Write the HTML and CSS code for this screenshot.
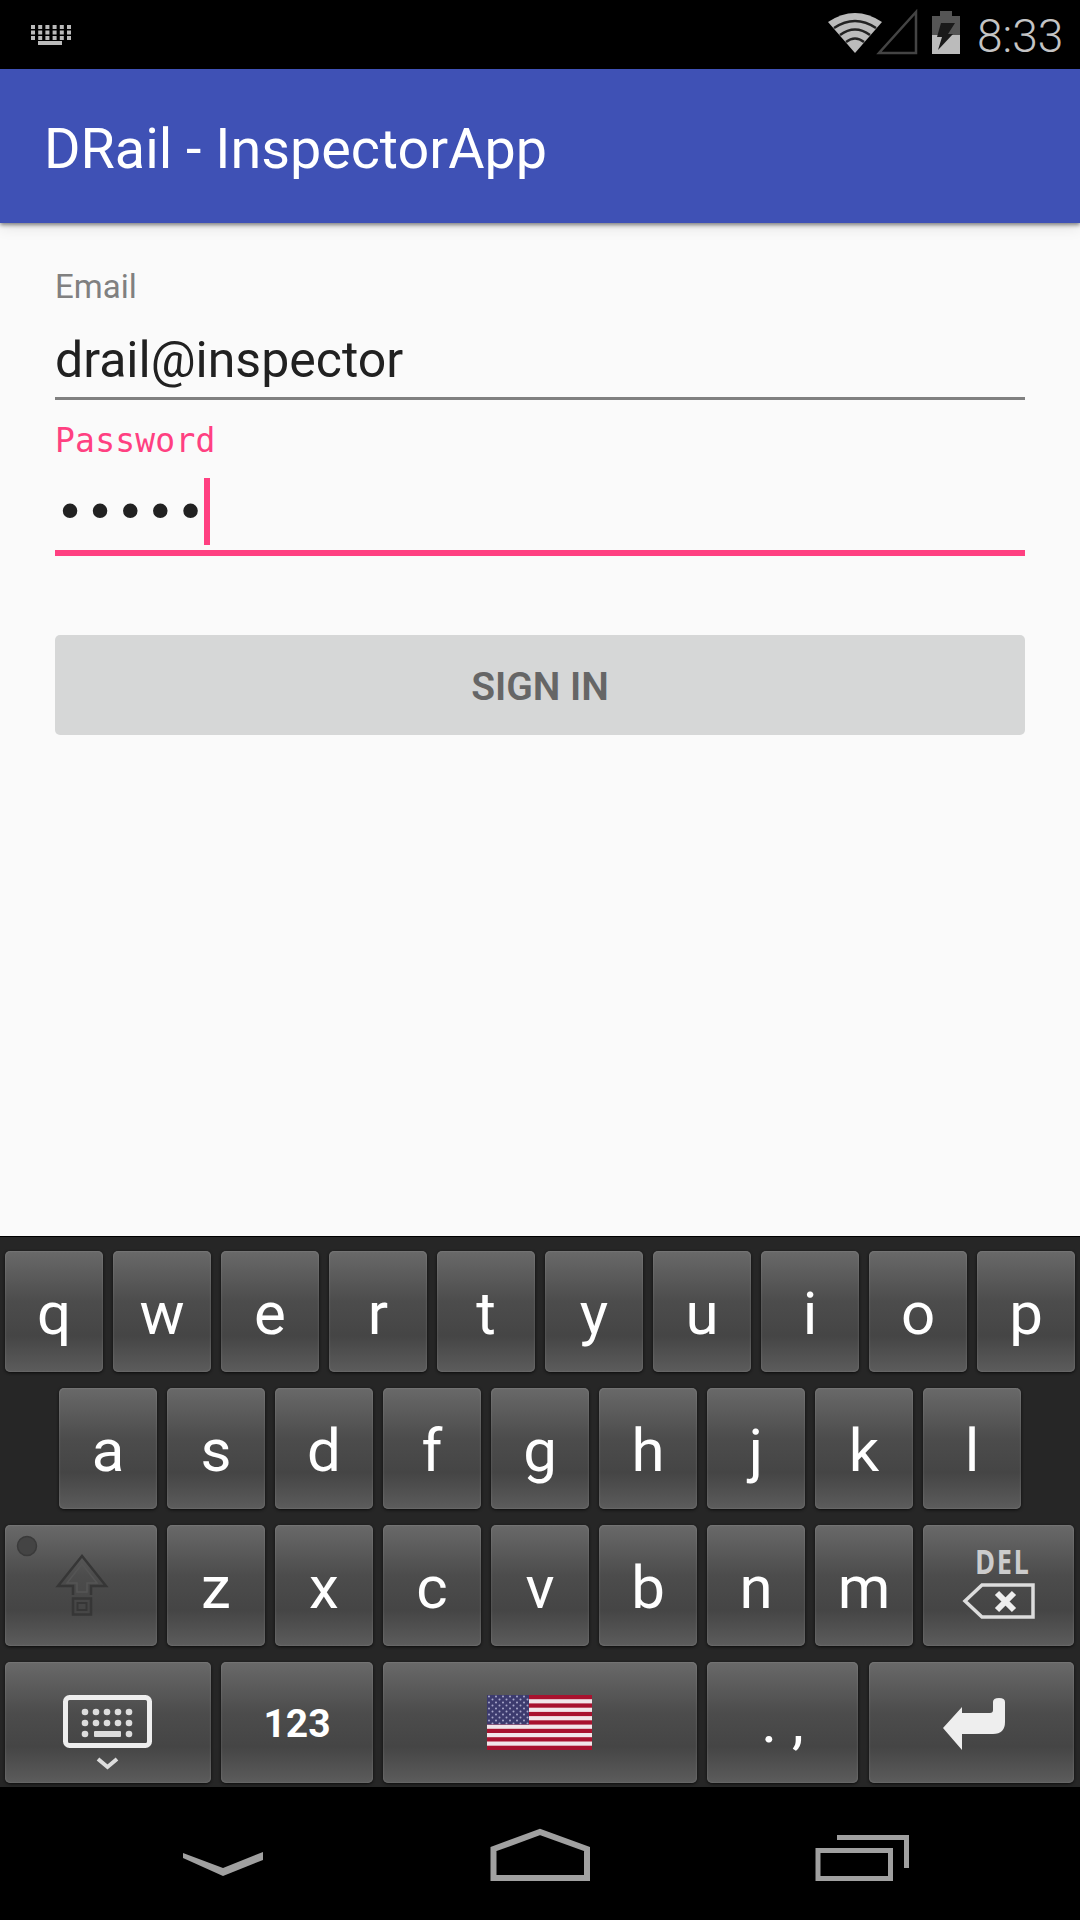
FILE: index.html
```html
<!DOCTYPE html>
<html lang="en">
<head>
<meta charset="UTF-8">
<meta name="viewport" content="width=device-width, initial-scale=1.0">
<title>DRail - InspectorApp</title>
<link rel="stylesheet" href="styles.css">
</head>
<body>

<div class="status-bar">
    <svg class="status-kbd" width="40" height="20" viewBox="0 0 40 20">
        <g stroke="#bbb" stroke-width="4" stroke-dasharray="4 3.2">
            <line x1="0" y1="2" x2="40" y2="2"/>
            <line x1="0" y1="7.5" x2="40" y2="7.5"/>
            <line x1="0" y1="13" x2="40" y2="13"/>
        </g>
        <rect x="7" y="16" width="24" height="4" fill="#bbb"/>
    </svg>
    <svg class="status-icons" width="140" height="69" viewBox="828 0 140 69">
        <!-- wifi -->
        <path d="M828 22 Q855 4 882 22 L855 53 Z" fill="#bbb"/>
        <g fill="none" stroke="#222" stroke-width="2.5">
            <path d="M834 28 Q855 14 876 28"/>
            <path d="M840 35 Q855 24 870 35"/>
            <path d="M846 42 Q855 35 864 42"/>
        </g>
        <!-- signal -->
        <path d="M916 12 V53 H879 Z" fill="none" stroke="#444" stroke-width="2.5"/>
        <!-- battery -->
        <rect x="940" y="11" width="12" height="6" fill="#555"/>
        <rect x="932" y="16" width="28" height="19" fill="#555"/>
        <rect x="932" y="35" width="28" height="19" fill="#bbb"/>
        <path d="M941 23 H955 L948 34 H953 L938 50 L942 37 H937 Z" fill="#1a1a1a"/>
    </svg>
    <span class="status-time">8:33</span>
</div>

<div class="app-bar">DRail - InspectorApp</div>

<div class="form">
    <div class="label">Email</div>
    <div class="field">drail@inspector</div>
    <div class="label label-focus">Password</div>
    <div class="field-focus">
        <span class="dots">•••••</span>
        <span class="cursor"></span>
    </div>
    <div class="sign-in">SIGN IN</div>
</div>

<div class="keyboard">
    <div class="row">
        <div class="key">q</div>
        <div class="key">w</div>
        <div class="key">e</div>
        <div class="key">r</div>
        <div class="key">t</div>
        <div class="key">y</div>
        <div class="key">u</div>
        <div class="key">i</div>
        <div class="key">o</div>
        <div class="key">p</div>
    </div>
    <div class="row row-home">
        <div class="key">a</div>
        <div class="key">s</div>
        <div class="key">d</div>
        <div class="key">f</div>
        <div class="key">g</div>
        <div class="key">h</div>
        <div class="key">j</div>
        <div class="key">k</div>
        <div class="key">l</div>
    </div>
    <div class="row">
        <div class="key key-icon key-152">
            <svg width="152" height="121" viewBox="5 1525 152 121">
                <circle cx="27" cy="1546" r="9.5" fill="#444" stroke="#3a3a3a" stroke-width="1.5"/>
                <path d="M73 1595 V1586 H58 L82 1556 L106 1586 H91 V1595" fill="none" stroke="#363636" stroke-width="2.5"/>
                <path d="M82 1564 L97 1583 H87 V1592 H77 V1583 H67 Z" fill="none" stroke="#555" stroke-width="1.5"/>
                <rect x="73" y="1598.500" width="18" height="16" fill="none" stroke="#363636" stroke-width="2.5"/>
                <rect x="77.500" y="1603" width="9" height="7" fill="none" stroke="#363636" stroke-width="2"/>
            </svg>
        </div>
        <div class="key">z</div>
        <div class="key">x</div>
        <div class="key">c</div>
        <div class="key">v</div>
        <div class="key">b</div>
        <div class="key">n</div>
        <div class="key">m</div>
        <div class="key key-del">
            <span class="del-text">DEL</span>
            <svg width="74" height="38" viewBox="962 1583 74 38">
                <path d="M965 1602 L982 1586 H1033 V1618 H982 Z" fill="none" stroke="#ddd" stroke-width="3.5"/>
                <path d="M997 1594 L1014 1611 M1014 1594 L997 1611" stroke="#eee" stroke-width="6"/>
            </svg>
        </div>
    </div>
    <div class="row">
        <div class="key key-icon key-206">
            <svg width="206" height="121" viewBox="5 1662 206 121">
                <rect x="65.5" y="1697.5" width="84" height="48" rx="4" fill="none" stroke="#eee" stroke-width="5"/>
                <g fill="#ddd">
                    <circle cx="85" cy="1712" r="3.3"/><circle cx="96" cy="1712" r="3.3"/><circle cx="107" cy="1712" r="3.3"/><circle cx="118" cy="1712" r="3.3"/><circle cx="129" cy="1712" r="3.3"/>
                    <circle cx="85" cy="1723" r="3.3"/><circle cx="96" cy="1723" r="3.3"/><circle cx="107" cy="1723" r="3.3"/><circle cx="118" cy="1723" r="3.3"/><circle cx="129" cy="1723" r="3.3"/>
                    <circle cx="85" cy="1734" r="3.3"/><circle cx="129" cy="1734" r="3.3"/>
                    <rect x="94" y="1731" width="27" height="6" rx="1"/>
                </g>
                <path d="M98 1759 L107.500 1767 L117 1759" fill="none" stroke="#ddd" stroke-width="4"/>
            </svg>
        </div>
        <div class="key key-152 key-num">123</div>
        <div class="key key-icon key-space">
            <svg width="105" height="55" viewBox="0 0 105 55">
                <rect width="105" height="55" fill="#a8122f"/>
                <g fill="#f1e6ea">
                    <rect y="4.2" width="105" height="4.2"/>
                    <rect y="12.700" width="105" height="4.2"/>
                    <rect y="21.100" width="105" height="4.2"/>
                    <rect y="29.600" width="105" height="4.2"/>
                    <rect y="38" width="105" height="4.2"/>
                    <rect y="46.500" width="105" height="4.2"/>
                </g>
                <rect width="42" height="29.500" fill="#3c3b6e"/>
                <pattern id="stars" width="7" height="6" patternUnits="userSpaceOnUse">
                    <circle cx="2" cy="1.500" r="1" fill="#a9a9cc"/>
                    <circle cx="5.500" cy="4.500" r="1" fill="#a9a9cc"/>
                </pattern>
                <rect width="42" height="29.500" fill="url(#stars)"/>
            </svg>
        </div>
        <div class="key key-152 key-punct">. ,</div>
        <div class="key key-icon key-205">
            <svg width="205" height="121" viewBox="869 1662 205 121">
                <path d="M943 1728 L962 1707 V1713 H990 Q993 1713 993 1710 V1702 Q993 1698 999 1698 Q1005 1698 1005 1702 V1722 Q1005 1734 993 1734 H962 V1750 Z" fill="#eee"/>
            </svg>
        </div>
    </div>
</div>

<div class="nav-bar">
    <svg width="1080" height="133" viewBox="0 1787 1080 133">
        <path d="M183 1853 L223 1868 L263 1852 V1860 L223 1876 L183 1858 Z" fill="#a0a0a0"/>
        <path d="M493.500 1878 V1849 L540 1832 L587 1849 V1878 Z" fill="none" stroke="#a0a0a0" stroke-width="6"/>
        <rect x="818" y="1850.500" width="72.500" height="28" fill="none" stroke="#a0a0a0" stroke-width="5"/>
        <path d="M837 1837.500 H906.500 V1868" fill="none" stroke="#a0a0a0" stroke-width="5"/>
    </svg>
</div>

</body>
</html>
```

FILE: styles.css
```css
body {
    margin: 0;
    width: 1080px;
    height: 1920px;
    overflow: hidden;
    display: flex;
    flex-direction: column;
    font-family: Roboto, sans-serif;
    background-color: #000;
}
.status-bar {
    height: 69px;
    flex: none;
    display: flex;
    align-items: center;
    background-color: #000;
}
.status-kbd {
    margin-left: 31px;
    margin-top: 1px;
}
.status-icons {
    margin-left: auto;
}
.status-time {
    width: 103px;
    margin-left: 9px;
    margin-top: 3px;
    font-size: 46px;
    font-weight: 300;
    color: #c4c4c4;
}
.app-bar {
    height: 154px;
    flex: none;
    box-sizing: border-box;
    padding: 6px 0 0 44px;
    display: flex;
    align-items: center;
    font-size: 55.7px;
    color: #fff;
    background-color: #3f51b5;
    box-shadow: 0 2px 4px rgba(0, 0, 0, 0.45), 0 4px 14px rgba(0, 0, 0, 0.1);
    position: relative;
}
.form {
    flex: 1;
    box-sizing: border-box;
    padding: 44px 55px 0;
    background-color: #fafafa;
}
.label {
    font-size: 33px;
    line-height: 40px;
    color: #808080;
}
.label-focus {
    margin-top: 21px;
    font-family: "DejaVu Sans Mono", monospace;
    letter-spacing: 0.2px;
    color: #ff4081;
}
.field {
    margin-top: 23px;
    padding-bottom: 7px;
    font-size: 50px;
    line-height: 60px;
    color: #212121;
    border-bottom: 3px solid #808080;
}
.field-focus {
    margin-top: 17px;
    padding-bottom: 5px;
    display: flex;
    align-items: center;
    border-bottom: 6px solid #ff4081;
}
.dots {
    width: 149px;
    height: 67px;
    font-family: "DejaVu Sans Mono", monospace;
    font-size: 50px;
    line-height: 69px;
    color: #212121;
}
.cursor {
    width: 6px;
    height: 67px;
    background-color: #ff4081;
}
.sign-in {
    margin-top: 79px;
    height: 100px;
    box-sizing: border-box;
    padding-top: 3px;
    display: flex;
    align-items: center;
    justify-content: center;
    border-radius: 5px;
    font-size: 39px;
    font-weight: 600;
    color: #666;
    background-color: #d6d7d7;
}
.keyboard {
    height: 551px;
    flex: none;
    box-sizing: border-box;
    padding: 15px 5px 0;
    display: flex;
    flex-direction: column;
    gap: 16px;
    background-color: #262626;
    box-shadow: inset 0 1px 0 #000;
}
.row {
    display: flex;
    gap: 10px;
}
.row-home {
    padding-left: 54px;
}
.key {
    width: 98px;
    height: 121px;
    flex: none;
    box-sizing: border-box;
    padding-top: 3px;
    display: flex;
    align-items: center;
    justify-content: center;
    border-radius: 5px;
    font-size: 60px;
    color: #fff;
    background: linear-gradient(#696969, #4c4c4c 42%, #454545 70%, #5c5c5c);
    box-shadow: 0 1px 3px #0c0c0c, inset 0 0 2px rgba(255, 255, 255, 0.25);
}
.key-icon {
    padding-top: 0;
}
.key-152 {
    width: 152px;
}
.key-206 {
    width: 206px;
}
.key-205 {
    width: 205px;
    margin-left: 1px;
}
.key-space {
    width: 314px;
}
.key-space svg {
    margin-right: 2px;
}
.key-num {
    font-size: 39px;
    font-weight: 700;
}
.key-punct {
    width: 151px;
    padding: 0 0 3px;
}
.key-del {
    width: 151px;
    flex-direction: column;
    justify-content: flex-start;
    padding-top: 17px;
}
.del-text {
    margin-left: 8px;
    font-family: "Open Sans", sans-serif;
    font-size: 34px;
    line-height: 38px;
    font-weight: 700;
    letter-spacing: 2px;
    color: #ccc;
    transform: scaleX(0.8);
}
.key-del svg {
    margin-top: 2px;
    margin-left: 1px;
}
.nav-bar {
    height: 133px;
    flex: none;
    background-color: #000;
}
.nav-bar svg {
    display: block;
}
```
